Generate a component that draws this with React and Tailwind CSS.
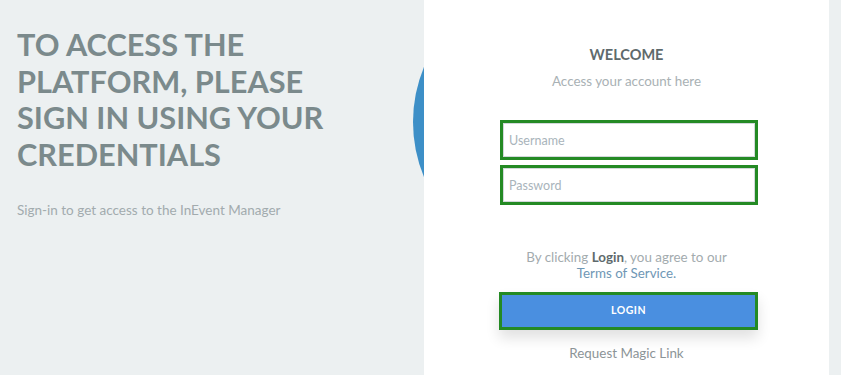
import React from "react";

export default function App() {
  return (
    <div
      className="relative flex h-[375px] w-[841px] overflow-hidden bg-[#ecf0f1]"
      style={{ fontFamily: "Lato, 'Open Sans', sans-serif" }}
    >
      {/* decorative circle behind the card */}
      <div className="absolute left-[413px] top-[-21px] h-[286px] w-[286px] rounded-full bg-[#3d8fc7]" />

      <div className="w-[424px] shrink-0 pl-[17px] pt-[27px]">
        <h1 className="text-[30.7px] font-bold leading-[36.7px] text-[#7b8a8c]">
          TO ACCESS THE
          <br />
          PLATFORM, PLEASE
          <br />
          SIGN IN USING YOUR
          <br />
          CREDENTIALS
        </h1>
        <p className="mt-[26px] text-[13.5px] text-[#a2abae]">
          Sign-in to get access to the InEvent Manager
        </p>
      </div>

      <div className="relative z-10 flex w-[405px] shrink-0 flex-col items-center bg-white pt-[46px]">
        <h2 className="text-[14.5px] font-bold leading-[18px] text-[#5e6a6c]">
          WELCOME
        </h2>
        <p className="mt-[9px] text-[13.4px] leading-[17px] text-[#a9b1b4]">
          Access your account here
        </p>

        <div className="ml-[5px] mt-[30px] flex w-[258px] flex-col gap-[5px]">
          <div className="border-[3px] border-[#248a24]">
            <input
              type="text"
              placeholder="Username"
              className="h-[34px] w-full border border-[#d3d8db] px-[5px] text-[12.5px] text-[#555] outline-none placeholder:text-[#a9b4bb]"
            />
          </div>
          <div className="border-[3px] border-[#248a24]">
            <input
              type="password"
              placeholder="Password"
              className="h-[34px] w-full border border-[#d3d8db] px-[5px] text-[12.5px] text-[#555] outline-none placeholder:text-[#a9b4bb]"
            />
          </div>
        </div>

        <p className="mt-[44px] text-center text-[13.4px] leading-[16px] text-[#a3abae]">
          By clicking <span className="font-bold text-[#5e6a6c]">Login</span>, you agree to our
          <br />
          <a href="#" className="text-[#6f97b5]">
            Terms of Service.
          </a>
        </p>

        <button
          type="button"
          className="ml-[4px] mt-[11px] h-[38px] w-[259px] border-[3px] border-[#248a24] bg-[#4a8fe0] text-[10.5px] font-bold tracking-[0.5px] text-white shadow-[0_8px_14px_rgba(0,0,0,0.12)]"
        >
          LOGIN
        </button>

        <a href="#" className="mt-[13px] text-[13.4px] text-[#8c9497]">
          Request Magic Link
        </a>
      </div>
    </div>
  );
}
